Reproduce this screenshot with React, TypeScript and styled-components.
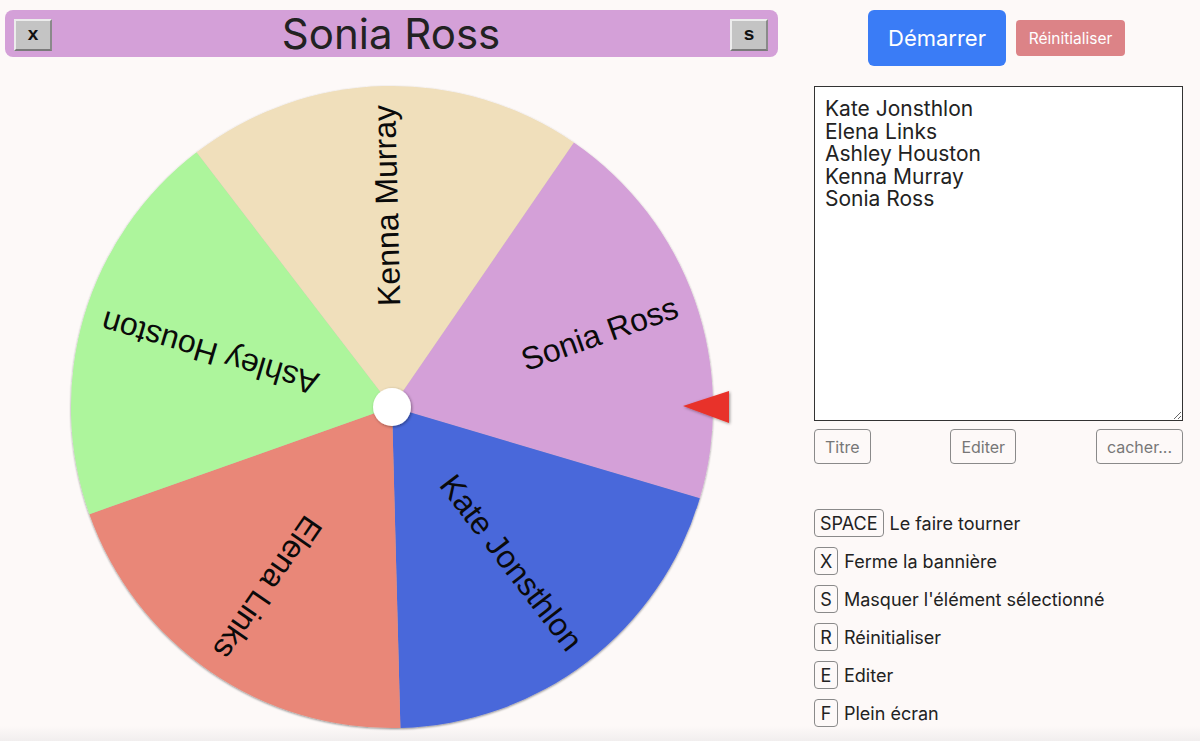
import styled, { createGlobalStyle } from "styled-components";

const GlobalStyle = createGlobalStyle`
  html, body {
    margin: 0;
    background: #fdf9f8;
    font-family: Inter, "Noto Sans", sans-serif;
    color: #222;
  }
`;

const names = [
  { name: "Sonia Ross", color: "#d4a0d8" },
  { name: "Kate Jonsthlon", color: "#4967da" },
  { name: "Elena Links", color: "#e98778" },
  { name: "Ashley Houston", color: "#adf59c" },
  { name: "Kenna Murray", color: "#f0dfbb" },
];

const listOrder = ["Kate Jonsthlon", "Elena Links", "Ashley Houston", "Kenna Murray", "Sonia Ross"];

const shortcuts = [
  { key: "SPACE", label: "Le faire tourner" },
  { key: "X", label: "Ferme la bannière" },
  { key: "S", label: "Masquer l'élément sélectionné" },
  { key: "R", label: "Réinitialiser" },
  { key: "E", label: "Editer" },
  { key: "F", label: "Plein écran" },
];

const R = 321;
const START = -55.5;

function point(angle: number, r: number) {
  const a = (angle * Math.PI) / 180;
  return `${(Math.cos(a) * r).toFixed(2)} ${(Math.sin(a) * r).toFixed(2)}`;
}

function Wheel() {
  const step = 360 / names.length;
  return (
    <WheelSvg width={700} height={660} viewBox="0 0 700 660">
      <defs>
        <filter id="rim" x="-10%" y="-10%" width="120%" height="120%">
          <feDropShadow dx="0" dy="1" stdDeviation="1.2" floodColor="#000" floodOpacity="0.45" />
        </filter>
        <filter id="soft" x="-50%" y="-50%" width="200%" height="200%">
          <feDropShadow dx="1" dy="1" stdDeviation="1.5" floodColor="#000" floodOpacity="0.4" />
        </filter>
      </defs>
      <g transform="translate(350 330)">
        <g filter="url(#rim)">
          {names.map((n, i) => {
            const a0 = START + i * step;
            const a1 = a0 + step;
            return (
              <path
                key={n.name}
                d={`M0 0 L${point(a0, R)} A${R} ${R} 0 0 1 ${point(a1, R)} Z`}
                fill={n.color}
              />
            );
          })}
        </g>
        {names.map((n, i) => {
          const mid = START + i * step + step / 2;
          return (
            <SliceLabel
              key={n.name}
              transform={`rotate(${mid})`}
              x={302}
              y={0}
              textAnchor="end"
              dominantBaseline="central"
            >
              {n.name}
            </SliceLabel>
          );
        })}
        <circle r={19} fill="#fff" filter="url(#soft)" />
        <polygon points="291,-1 337,-16 337,16" fill="#e8332a" filter="url(#soft)" />
      </g>
    </WheelSvg>
  );
}

export default function App() {
  return (
    <>
      <GlobalStyle />
      <Page>
        <LeftCol>
          <Banner>
            <BevelButton>x</BevelButton>
            <BannerTitle>Sonia Ross</BannerTitle>
            <BevelButton>s</BevelButton>
          </Banner>
          <Wheel />
        </LeftCol>
        <RightCol>
          <TopActions>
            <StartButton>Démarrer</StartButton>
            <ResetButton>Réinitialiser</ResetButton>
          </TopActions>
          <NameList defaultValue={listOrder.join("\n")} spellCheck={false} />
          <ToolRow>
            <ToolButton>Titre</ToolButton>
            <ToolButton>Editer</ToolButton>
            <ToolButton>cacher...</ToolButton>
          </ToolRow>
          <Shortcuts>
            {shortcuts.map((s) => (
              <ShortcutRow key={s.key}>
                <Kbd>{s.key}</Kbd>
                <span>{s.label}</span>
              </ShortcutRow>
            ))}
          </Shortcuts>
        </RightCol>
      </Page>
    </>
  );
}

const Page = styled.div`
  display: flex;
  gap: 36px;
  padding: 10px 17px 0 5px;
  height: 741px;
  box-sizing: border-box;
  overflow: hidden;
  background: linear-gradient(to bottom, #fdf9f8 0, #fdf9f8 726px, #f1eeee 741px);
`;

const LeftCol = styled.div`
  width: 773px;
  display: flex;
  flex-direction: column;
  align-items: center;
`;

const Banner = styled.div`
  width: 100%;
  height: 47px;
  box-sizing: border-box;
  background: #d4a0d8;
  border-radius: 8px;
  display: grid;
  grid-template-columns: auto 1fr auto;
  align-items: center;
  padding: 0 10px 0 9px;
`;

const BannerTitle = styled.div`
  text-align: center;
  font-size: 42px;
  line-height: 47px;
  color: #222;
`;

const BevelButton = styled.button`
  width: 38px;
  height: 32px;
  background: #c4c4c4;
  border: 2px solid;
  border-color: #ececec #8a8a8a #7a7a7a #ececec;
  font-family: "Liberation Sans", Arial, sans-serif;
  font-weight: bold;
  font-size: 19px;
  line-height: 1;
  color: #111;
  padding: 0 0 2px;
  margin-top: 2px;
`;

const WheelSvg = styled.svg`
  display: block;
  margin-top: 20px;
`;

const SliceLabel = styled.text`
  font-family: "Liberation Sans", Arial, sans-serif;
  font-size: 32px;
  fill: #0a0a0a;
`;

const RightCol = styled.div`
  width: 369px;
  display: flex;
  flex-direction: column;
`;

const TopActions = styled.div`
  height: 56px;
  display: flex;
  align-items: center;
  justify-content: center;
  gap: 10px;
  padding-right: 4px;
`;

const StartButton = styled.button`
  width: 138px;
  height: 56px;
  background: #3a7cf6;
  border: none;
  border-radius: 6px;
  color: #fff;
  font-family: Inter, sans-serif;
  font-size: 22px;
`;

const ResetButton = styled.button`
  width: 109px;
  height: 36px;
  background: #dc8387;
  border: none;
  border-radius: 4px;
  color: #fff;
  font-family: Inter, sans-serif;
  font-size: 15.5px;
  padding: 0;
`;

const NameList = styled.textarea`
  margin-top: 20px;
  width: 100%;
  height: 335px;
  box-sizing: border-box;
  border: 1px solid #333;
  background: #fff;
  padding: 11px 10px 9px;
  font-family: Inter, sans-serif;
  font-size: 21px;
  line-height: 22.5px;
  color: #222;
  outline: none;
`;

const ToolRow = styled.div`
  margin-top: 8px;
  display: flex;
  justify-content: space-between;
`;

const ToolButton = styled.button`
  height: 35px;
  padding: 0 10px;
  background: transparent;
  border: 1px solid #8a8a8a;
  border-radius: 4px;
  color: #777;
  font-family: Inter, sans-serif;
  font-size: 16px;
`;

const Shortcuts = styled.div`
  margin-top: 45px;
  display: flex;
  flex-direction: column;
  gap: 10px;
`;

const ShortcutRow = styled.div`
  display: flex;
  align-items: center;
  gap: 6px;
  font-size: 18px;
  color: #222;
  height: 28px;
`;

const Kbd = styled.span`
  min-width: 24px;
  height: 28px;
  box-sizing: border-box;
  padding: 0 5px;
  border: 1px solid #8a8a8a;
  border-radius: 4px;
  display: flex;
  align-items: center;
  justify-content: center;
  font-size: 18px;
`;
